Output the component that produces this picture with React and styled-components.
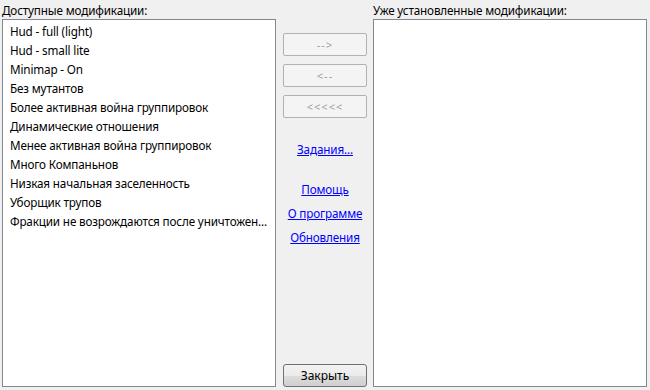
import React from 'react'
import styled, { createGlobalStyle } from 'styled-components'

const GlobalStyle = createGlobalStyle`
  html, body {
    margin: 0;
    padding: 0;
    background: #f0f0f0;
  }
  body {
    font-family: 'Noto Sans', 'Open Sans', sans-serif;
    font-size: 11.7px;
    letter-spacing: -0.15px;
    color: #000;
  }
`

const available = [
  'Hud - full (light)',
  'Hud - small lite',
  'Minimap - On',
  'Без мутантов',
  'Более активная война группировок',
  'Динамические отношения',
  'Менее активная война группировок',
  'Много Компаньнов',
  'Низкая начальная заселенность',
  'Уборщик трупов',
  'Фракции не возрождаются после уничтожен...',
]

const Window = styled.div`
  width: 650px;
  height: 390px;
  box-sizing: border-box;
  padding: 0 4px 3px 2px;
  display: grid;
  grid-template-columns: 274px 1fr 274px;
`

const Column = styled.div`
  display: flex;
  flex-direction: column;
`

const Caption = styled.div`
  height: 19px;
  line-height: 21px;
  white-space: nowrap;
`

const ListBox = styled.ul`
  flex: 1;
  margin: 0;
  padding: 2px 0 0 0;
  list-style: none;
  background: #fff;
  border: 1px solid #828790;
  overflow: hidden;
`

const Item = styled.li`
  height: 19px;
  line-height: 19px;
  padding-left: 7px;
  white-space: nowrap;
`

const Middle = styled.div`
  display: flex;
  flex-direction: column;
  align-items: center;
  padding: 33px 6px 0 7px;
`

const MoveButton = styled.button`
  width: 84px;
  height: 23px;
  margin-bottom: 8px;
  box-sizing: border-box;
  border: 1px solid #adb2b5;
  border-radius: 2px;
  background: #f4f4f4;
  color: #a0a0a0;
  font-family: inherit;
  font-size: 11px;
  letter-spacing: 1px;
  padding: 0;
`

const Links = styled.div`
  display: flex;
  flex-direction: column;
  align-items: center;
  margin-top: ${(p) => p.top}px;
  gap: 6px;
`

const LinkText = styled.a`
  color: #0000ff;
  text-decoration: underline;
  line-height: 18px;
  cursor: pointer;
`

const CloseButton = styled.button`
  margin-top: auto;
  width: 84px;
  height: 23px;
  box-sizing: border-box;
  border: 1px solid #707070;
  border-radius: 3px;
  background: linear-gradient(#f2f2f2 0%, #ebebeb 50%, #dddddd 51%, #cfcfcf 100%);
  font-family: inherit;
  font-size: 12px;
  color: #000;
  padding: 0;
`

export default function App() {
  return (
    <>
      <GlobalStyle />
      <Window>
        <Column>
          <Caption>Доступные модификации:</Caption>
          <ListBox>
            {available.map((m) => (
              <Item key={m}>{m}</Item>
            ))}
          </ListBox>
        </Column>
        <Middle>
          <MoveButton disabled>--&gt;</MoveButton>
          <MoveButton disabled>&lt;--</MoveButton>
          <MoveButton disabled>&lt;&lt;&lt;&lt;&lt;</MoveButton>
          <Links top={14}>
            <LinkText>Задания...</LinkText>
          </Links>
          <Links top={22}>
            <LinkText>Помощь</LinkText>
            <LinkText>О программе</LinkText>
            <LinkText>Обновления</LinkText>
          </Links>
          <CloseButton>Закрыть</CloseButton>
        </Middle>
        <Column>
          <Caption>Уже установленные модификации:</Caption>
          <ListBox />
        </Column>
      </Window>
    </>
  )
}
